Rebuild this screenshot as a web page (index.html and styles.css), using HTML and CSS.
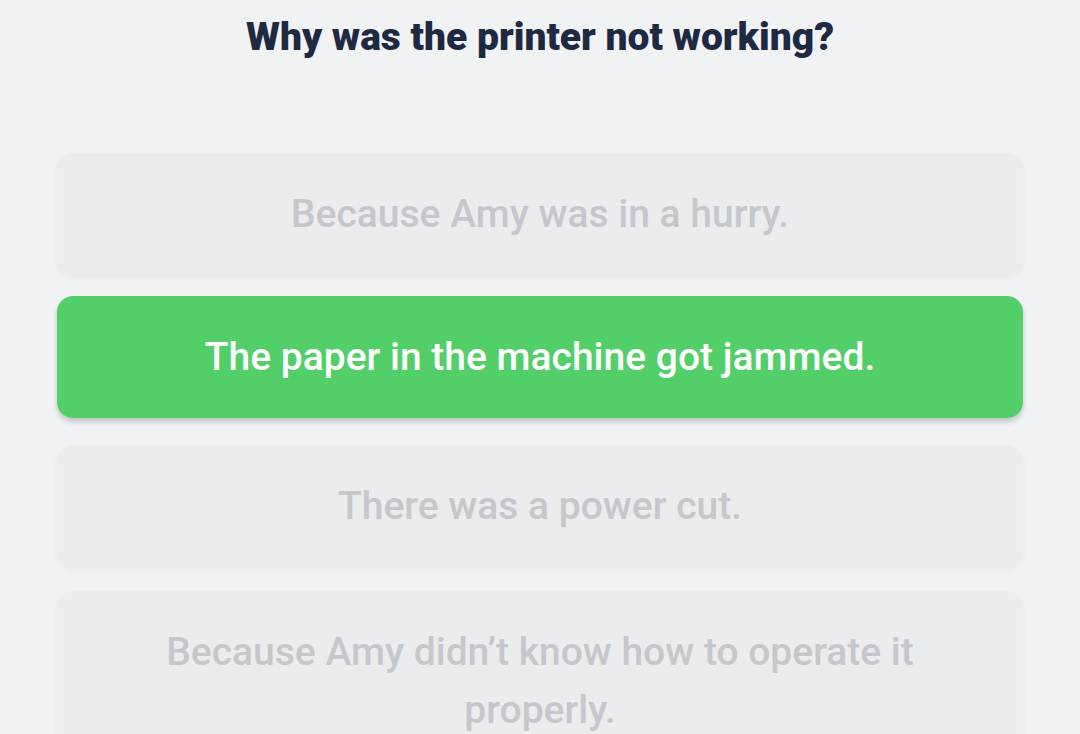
FILE: index.html
```html
<!DOCTYPE html>
<html>
<head>
<meta charset="utf-8">
<link rel="stylesheet" href="styles.css">
</head>
<body>
<main class="quiz">
  <h1 class="question">Why was the printer not working?</h1>
  <div class="options">
    <div class="option">Because Amy was in a hurry.</div>
    <div class="option selected">The paper in the machine got jammed.</div>
    <div class="option">There was a power cut.</div>
    <div class="option">Because Amy didn’t know how to operate it properly.</div>
  </div>
</main>
</body>
</html>
```
FILE: styles.css
```css
html, body {
  margin: 0;
  padding: 0;
  background: #f1f2f4;
}
body {
  font-family: Roboto, "Liberation Sans", sans-serif;
  overflow: hidden;
  height: 734px;
}
.quiz {
  padding: 0 57px 0 57px;
}
.question {
  margin: 0;
  padding-top: 14px;
  height: 153px;
  box-sizing: border-box;
  text-align: center;
  font-size: 39px;
  font-weight: 900;
  color: #1e2942;
  line-height: 46px;
}
.options {
  display: flex;
  flex-direction: column;
  gap: 24px;
}
.option {
  background: #ebecee;
  border-radius: 16px;
  padding: 32px 60px;
  text-align: center;
  font-size: 39px;
  font-weight: 500;
  line-height: 58px;
  color: #c5c7cc;
  box-shadow: 0 3px 6px rgba(0,0,0,0.04);
}
.option.selected {
  background: #52cf69;
  color: #ffffff;
  transform: translateY(-3px);
  box-shadow: 0 4px 5px rgba(0,0,0,0.18);
}
```
